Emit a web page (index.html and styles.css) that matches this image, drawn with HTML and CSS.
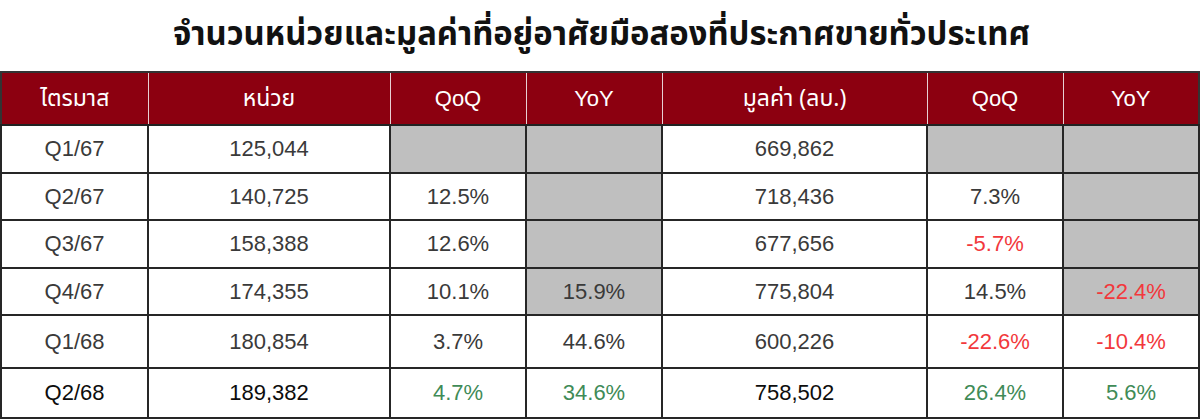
FILE: index.html
```html
<!DOCTYPE html>
<html lang="th">
<head>
<meta charset="utf-8">
<title>จำนวนหน่วยและมูลค่าที่อยู่อาศัยมือสองที่ประกาศขายทั่วประเทศ</title>
<link rel="stylesheet" href="styles.css">
</head>
<body>
<div class="page">
  <h1 class="title">จำนวนหน่วยและมูลค่าที่อยู่อาศัยมือสองที่ประกาศขายทั่วประเทศ</h1>
  <table class="data">
    <colgroup>
      <col class="c-q"><col class="c-u"><col class="c-p"><col class="c-p"><col class="c-v"><col class="c-p"><col class="c-p">
    </colgroup>
    <thead>
      <tr>
        <th class="thai">ไตรมาส</th>
        <th class="thai">หน่วย</th>
        <th>QoQ</th>
        <th>YoY</th>
        <th class="thai">มูลค่า (ลบ.)</th>
        <th>QoQ</th>
        <th>YoY</th>
      </tr>
    </thead>
    <tbody>
      <tr class="r1">
        <td>Q1/67</td><td>125,044</td><td class="na"></td><td class="na"></td><td>669,862</td><td class="na"></td><td class="na"></td>
      </tr>
      <tr class="r2">
        <td>Q2/67</td><td>140,725</td><td>12.5%</td><td class="na"></td><td>718,436</td><td>7.3%</td><td class="na"></td>
      </tr>
      <tr class="r3">
        <td>Q3/67</td><td>158,388</td><td>12.6%</td><td class="na"></td><td>677,656</td><td class="neg">-5.7%</td><td class="na"></td>
      </tr>
      <tr class="r4">
        <td>Q4/67</td><td>174,355</td><td>10.1%</td><td class="na">15.9%</td><td>775,804</td><td>14.5%</td><td class="na neg">-22.4%</td>
      </tr>
      <tr class="r5">
        <td>Q1/68</td><td>180,854</td><td>3.7%</td><td>44.6%</td><td>600,226</td><td class="neg">-22.6%</td><td class="neg">-10.4%</td>
      </tr>
      <tr class="r6 latest">
        <td>Q2/68</td><td>189,382</td><td class="pos">4.7%</td><td class="pos">34.6%</td><td>758,502</td><td class="pos">26.4%</td><td class="pos">5.6%</td>
      </tr>
    </tbody>
  </table>
</div>
</body>
</html>
```
FILE: styles.css
```css
html, body {
  margin: 0;
  padding: 0;
  background: #ffffff;
}

.page {
  width: 1200px;
}

.title {
  margin: 0;
  height: 71px;
  line-height: 70px;
  text-align: center;
  font-family: "Noto Sans Thai", "Noto Sans", "Liberation Sans", sans-serif;
  font-weight: 700;
  font-size: 32.8px;
  color: #111111;
  padding-left: 3px;
}

.data {
  width: 1199px;
  border-collapse: collapse;
  table-layout: fixed;
  font-family: "Liberation Sans", Arial, sans-serif;
  font-size: 22px;
  color: #3a3a3a;
}

.c-q { width: 147px; }
.c-u { width: 242px; }
.c-p { width: 136px; }
.c-v { width: 265px; }

.data th {
  background: #8c0010;
  color: #ffffff;
  font-weight: 400;
  height: 51px;
  padding: 0;
  text-align: center;
  border-top: 2px solid #333333;
  border-bottom: 2px solid #222222;
  border-left: 1px solid #e8d0d3;
  border-right: 1px solid #e8d0d3;
}

.data th:first-child { border-left: 2px solid #333333; }
.data th:last-child { border-right: 2px solid #333333; }

.data th.thai {
  font-family: "Noto Sans Thai", "Noto Sans", "Liberation Sans", sans-serif;
  font-size: 23px;
}

.data td {
  padding: 0;
  text-align: center;
  border: 2px solid #262626;
  height: 45px;
}

.data .r2 td, .data .r4 td { height: 45px; }
.data .r1 td, .data .r3 td { height: 46px; }
.data .r5 td { height: 51px; }
.data .r6 td { height: 48px; }

.data td.na { background: #bfbfbf; }
.data td.neg { color: #f2383c; }
.data td.pos { color: #3f8b57; }

.data .latest td { color: #0d0d0d; }
.data .latest td.pos { color: #3f8b57; }
```
